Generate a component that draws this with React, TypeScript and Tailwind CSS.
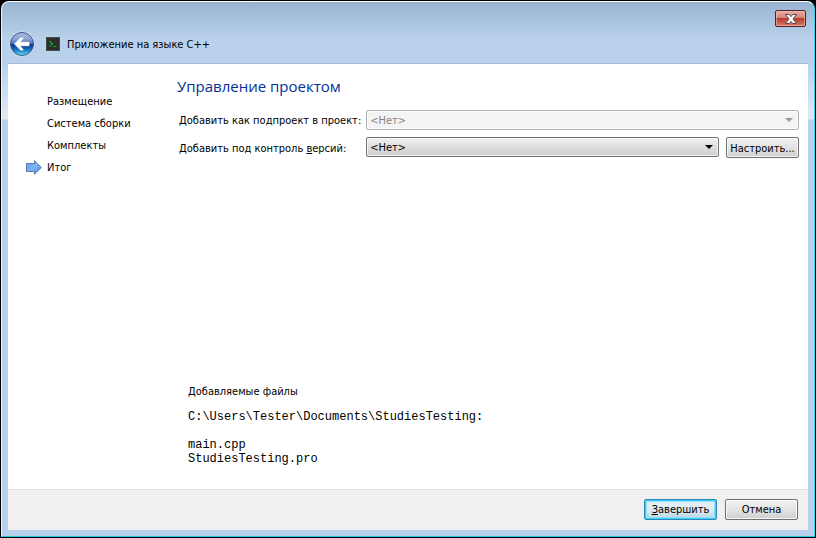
import type { ReactNode } from "react";

const steps = ["Размещение", "Система сборки", "Комплекты", "Итог"];
const currentStep = 3;

function BackIcon() {
  return (
    <svg className="h-[26px] w-[26px]" viewBox="0 0 26 26" aria-hidden="true">
      <defs>
        <linearGradient id="backFill" x1="0" y1="0" x2="0" y2="1">
          <stop offset="0" stopColor="#a9bfe2" />
          <stop offset="0.28" stopColor="#8aa5d6" />
          <stop offset="0.5" stopColor="#4a70b8" />
          <stop offset="0.51" stopColor="#0b2f80" />
          <stop offset="0.75" stopColor="#1a72be" />
          <stop offset="1" stopColor="#5fe6fb" />
        </linearGradient>
      </defs>
      <circle cx="13" cy="13" r="12.5" fill="#d9e5f3" />
      <circle cx="13" cy="13" r="11.5" fill="url(#backFill)" stroke="#3d5488" />
      <path
        d="M5.5 13 L11.6 7 H14.2 L11 11.3 H20 V14.7 H11 L14.2 19 H11.6 Z"
        fill="#fff"
        stroke="#fff"
        strokeWidth="0.8"
        strokeLinejoin="round"
      />
    </svg>
  );
}

function ConsoleIcon() {
  return (
    <svg className="h-3.5 w-3.5" viewBox="0 0 14 14" aria-hidden="true">
      <rect width="14" height="14" fill="#4a4c4b" />
      <rect x="1" y="1" width="12" height="12" fill="#2b2d2c" />
      <path d="M3.5 4 L6.5 6.8 L3.5 9.6" fill="none" stroke="#0cb012" strokeWidth="1.2" />
      <path d="M7 9.5 H10.5" stroke="#0cb012" strokeWidth="1" />
    </svg>
  );
}

function StepArrow() {
  return (
    <svg className="h-4 w-4" viewBox="0 0 16 16" aria-hidden="true">
      <defs>
        <linearGradient id="stepArrow" x1="0" y1="0" x2="1" y2="1">
          <stop offset="0" stopColor="#5fa3f0" />
          <stop offset="0.5" stopColor="#7db5f6" />
          <stop offset="1" stopColor="#3f8ae6" />
        </linearGradient>
      </defs>
      <path
        d="M0.5 3.5 H8.5 V0.8 L15.3 7.5 L8.5 14.2 V11.5 H0.5 Z"
        fill="url(#stepArrow)"
        stroke="#5878a4"
      />
    </svg>
  );
}

function CloseIcon() {
  return (
    <svg className="h-2.5 w-3" viewBox="0 0 12 10" aria-hidden="true">
      <path
        d="M0.5 0.5 H4.2 L6 2.6 L7.8 0.5 H11.5 L8 5 L11.5 9.5 H7.8 L6 7.4 L4.2 9.5 H0.5 L4 5 Z"
        fill="#fff"
        stroke="#5b4a54"
      />
    </svg>
  );
}

type ComboProps = { id: string; disabled?: boolean };

function Combo({ id, disabled }: ComboProps) {
  return (
    <div className="relative min-w-0 flex-1">
      <select
        id={id}
        disabled={disabled}
        className="block h-5 w-full appearance-none rounded-xs border border-[#707070] bg-linear-to-b from-[#f2f2f2] from-0% via-[#dddddd] via-50% to-[#cfcfcf] px-[3px] pt-0.5 leading-4 text-black opacity-100 inset-ring inset-ring-white/70 disabled:border-[#adb2b5] disabled:bg-[#f4f4f4] disabled:bg-none disabled:text-[#838383]"
      >
        <option>&lt;Нет&gt;</option>
      </select>
      <svg
        className={
          disabled
            ? "pointer-events-none absolute top-2 right-1.5 h-1 w-2 text-[#9a9a9a]"
            : "pointer-events-none absolute top-2 right-1.5 h-1 w-2 text-black"
        }
        viewBox="0 0 8 4"
        aria-hidden="true"
      >
        <path d="M0 0 H8 L4 4 Z" fill="currentColor" />
      </svg>
    </div>
  );
}

type PushButtonProps = { children: ReactNode; primary?: boolean };

function PushButton({ children, primary }: PushButtonProps) {
  return (
    <button
      type="button"
      className={
        primary
          ? "h-[21px] w-[73px] rounded-xs border border-[#2f86b8] bg-linear-to-b from-[#eaf3f8] via-[#dcebf2] via-50% to-[#bdd5e0] pt-0.5 leading-4 whitespace-nowrap shadow-[inset_0_0_0_1px_#35d0f7,inset_0_0_1px_2px_#8be2f8]"
          : "h-[21px] w-[73px] rounded-xs border border-[#707070] bg-linear-to-b from-[#f2f2f2] via-[#e3e3e3] via-50% to-[#cfcfcf] pt-0.5 leading-4 whitespace-nowrap inset-ring inset-ring-white/80"
      }
    >
      {children}
    </button>
  );
}

export default function App() {
  return (
    <div className="flex min-h-screen flex-col bg-black p-px font-['DejaVu_Sans_Condensed','Noto_Sans',sans-serif] text-[11px] leading-4 text-black">
      <div className="flex flex-1 flex-col rounded-t-lg border border-t-white border-r-[#35d5ee] border-b-[#22c6de] border-l-[#eef4fb] bg-[#b9d1ea]">
        <header className="flex h-[61px] flex-col rounded-t-lg bg-linear-to-b from-[#99b4d1] to-[#b9d1ea] to-60%">
          <div className="flex justify-end pt-2 pr-2">
            <button
              type="button"
              aria-label="Закрыть"
              className="flex h-[17px] w-[31px] items-center justify-center rounded-xs border border-[#5a1d26] bg-[linear-gradient(#e5aba3,#d58478_45%,#b93d2b_50%,#d57a62)] inset-ring inset-ring-[#efc3ba]/60"
            >
              <CloseIcon />
            </button>
          </div>
          <div className="flex items-center pt-1 pl-[7px]">
            <button type="button" aria-label="Назад">
              <BackIcon />
            </button>
            <div className="flex items-center gap-[7px] pl-[11px]">
              <ConsoleIcon />
              <h1 className="pt-0.5">Приложение на языке C++</h1>
            </div>
          </div>
        </header>

        <div className="flex flex-1 flex-col bg-[linear-gradient(#b9d1ea,#dfeaf6_56px,#b9d1ea_57px)] px-1.5 pb-1.5">
          <div className="flex flex-1 border-t border-[#a5bddb] bg-white">
            <nav className="w-[169px] shrink-0 pt-[30px] pl-[18px]">
              <ol className="flex flex-col gap-1.5">
                {steps.map((step, index) => (
                  <li key={step} className="flex items-center gap-[5px]">
                    <span className="w-4">{index === currentStep && <StepArrow />}</span>
                    {step}
                  </li>
                ))}
              </ol>
            </nav>

            <main className="flex min-w-0 flex-1 flex-col pt-3 pr-[9px] pb-[23px]">
              <h2 className="font-['Open_Sans','Noto_Sans',sans-serif] text-[15px] leading-5 text-[#003399]">
                Управление проектом
              </h2>
              <div className="grid grid-cols-[auto_1fr] items-center gap-x-[5px] gap-y-[7px] pt-3.5 pl-0.5">
                <label htmlFor="subproject" className="pt-0.5">
                  Добавить как подпроект в проект:
                </label>
                <Combo id="subproject" disabled />
                <label htmlFor="vcs" className="pt-0.5">
                  Добавить под контроль <u>в</u>ерсий:
                </label>
                <div className="flex gap-[7px]">
                  <Combo id="vcs" />
                  <PushButton>Настроить...</PushButton>
                </div>
              </div>

              <section className="mt-auto pl-[11px]">
                <h3>Добавляемые файлы</h3>
                <pre className="pt-2.5 font-['Liberation_Mono',monospace] text-xs leading-[14px]">
                  {"C:\\Users\\Tester\\Documents\\StudiesTesting:\n\nmain.cpp\nStudiesTesting.pro"}
                </pre>
              </section>
            </main>
          </div>

          <footer className="flex h-[41px] items-center justify-end gap-2 border-t border-[#dfdfdf] bg-[#f0f0f0] pr-2.5 pb-0.5">
            <PushButton primary>
              <u>З</u>авершить
            </PushButton>
            <PushButton>Отмена</PushButton>
          </footer>
        </div>
      </div>
    </div>
  );
}
